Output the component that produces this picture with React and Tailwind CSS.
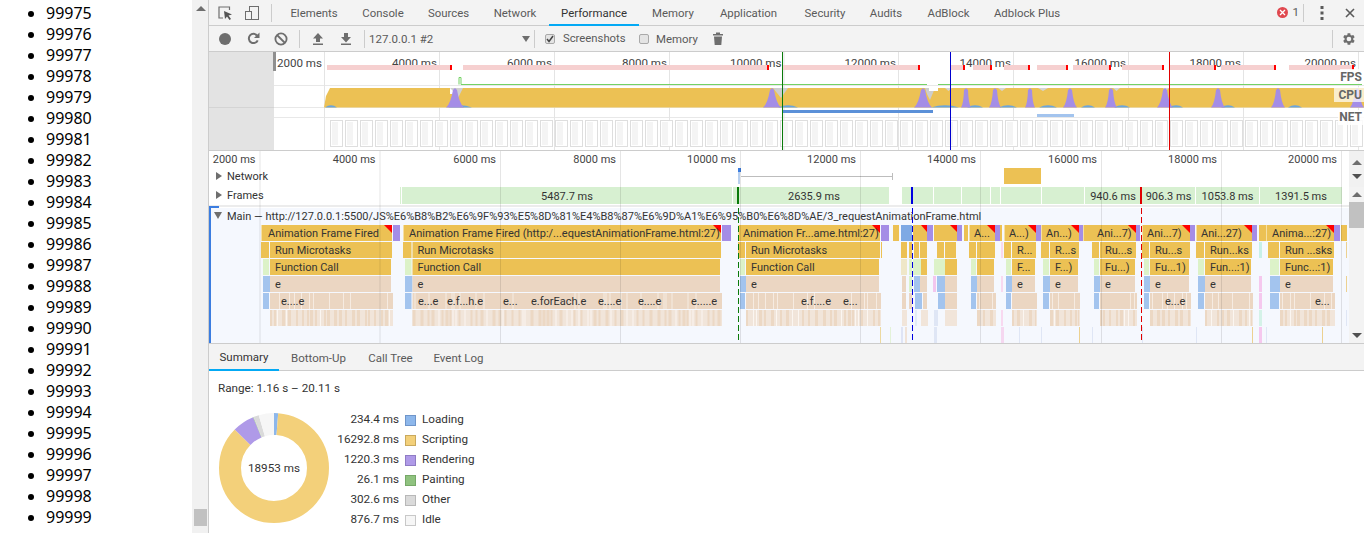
import React from 'react';

const YELLOW = '#ecc154';
const PURPLE = '#a48de6';
const TAN = '#ebd6c2';
const PALE = '#f1e5da';
const BLUE = '#a3c4ee';
const GREEN = '#dcf2c8';
const TEXT = '#333333';

const TABS = [
  ['Elements', 'w-[72px]'],
  ['Console', 'w-[66px]'],
  ['Sources', 'w-[65px]'],
  ['Network', 'w-[68px]'],
  ['Performance', 'w-[90px]'],
  ['Memory', 'w-[68px]'],
  ['Application', 'w-[83px]'],
  ['Security', 'w-[70px]'],
  ['Audits', 'w-[52px]'],
  ['AdBlock', 'w-[73px]'],
  ['Adblock Plus', 'w-[84px]'],
];

const LEGEND = [
  ['234.4 ms', 'Loading', 'bg-[#8db7eb] border-[#6f95c9]'],
  ['16292.8 ms', 'Scripting', 'bg-[#f3d07a] border-[#c9a95d]'],
  ['1220.3 ms', 'Rendering', 'bg-[#af9ae8] border-[#8f7cc4]'],
  ['26.1 ms', 'Painting', 'bg-[#8fc27f] border-[#76a868]'],
  ['302.6 ms', 'Other', 'bg-[#dadada] border-[#b8b8b8]'],
  ['876.7 ms', 'Idle', 'bg-[#f6f6f6] border-[#c8c8c8]'],
];

const SLICES = [
  [234.4, '#8db7eb'],
  [16292.8, '#f3d07a'],
  [1220.3, '#af9ae8'],
  [26.1, '#8fc27f'],
  [302.6, '#dadada'],
  [876.7, '#f6f6f6'],
];

// overview: fps segments [start, end], each closed by a red tick
const FPS = [[327, 452], [463, 769], [783, 920], [951, 965], [973, 992], [1004, 1030], [1037, 1068], [1073, 1111], [1122, 1164], [1170, 1216], [1221, 1276], [1289, 1354]];
const SPIKES = [[455, 9], [772, 9], [923, 9], [966, 5], [995, 6], [1030, 5], [1070, 7], [1111, 6], [1165, 8], [1218, 7], [1278, 7], [1357, 7]];
const HUMPS = [[331, 6], [460, 12], [788, 10], [945, 14], [975, 8], [1008, 9], [1048, 9], [1088, 7], [1122, 8], [1176, 7], [1228, 7], [1295, 7]];

// flame chart groups: start, start of the js stack, end, labels
const GROUPS = [
  { a: 261, l: 270, z: 392, t: ['Animation Frame Fired', 268], r2: 'Run Microtasks', r3: 'Function Call', r5: [['e....e', 281]] },
  { a: 403, l: 412.5, z: 721, t: ['Animation Frame Fired (http:/...equestAnimationFrame.html:27)', 409], r2: 'Run Microtasks', r3: 'Function Call', r5: [['e...e', 418], ['e.f...h.e', 447], ['e...', 503], ['e.forEach.e', 531], ['e....e', 598], ['e....e', 638], ['e.....e', 691]] },
  { a: 738, l: 746, z: 880, t: ['Animation Fr...ame.html:27)', 743], r2: 'Run Microtasks', r3: 'Function Call', r5: [['e.f....e', 801], ['e...', 843]] },
  { a: 969, l: 977, z: 995, t: ['A...', 974], r2: '', r3: '', e: '', r5: [] },
  { a: 1004, l: 1012, z: 1036, t: ['A...)', 1009], r2: 'R...', r3: 'F...', r5: [] },
  { a: 1041, l: 1050, z: 1079, t: ['An...)', 1046], r2: 'R...s', r3: 'F...)', r5: [] },
  { a: 1083, l: 1100, z: 1136, s: 1092, t: ['Ani...7)', 1097], r2: 'Ru...s', r3: 'Fu...)', r5: [] },
  { a: 1142, l: 1150, z: 1190, t: ['Ani...7)', 1147], r2: 'Ru...s', r3: 'Fu...1)', r5: [['e...e', 1165]] },
  { a: 1196, l: 1205, z: 1252, t: ['Ani...27)', 1201], r2: 'Run...ks', r3: 'Fun...:1)', r5: [] },
  { a: 1266, l: 1280, z: 1334, s: 1268, t: ['Anima...:27)', 1272], r2: 'Run ...sks', r3: 'Func...:1)', r5: [['e...', 1315]] },
];

// the short tasks between the long frames: x1, x2, colour, row
const SMALL = [
  [893, 899, YELLOW, 0], [901, 912, '#7ea9e4', 0], [913, 927, YELLOW, 0], [927, 933, PURPLE, 0], [934, 957, YELLOW, 0], [957, 962, PURPLE, 0], [964, 968, YELLOW, 0],
  [881, 882, YELLOW, 1], [901, 907, YELLOW, 1], [909, 912, YELLOW, 1], [914, 919, YELLOW, 1], [920, 927, YELLOW, 1], [937, 944, YELLOW, 1], [945, 956, YELLOW, 1],
  [901, 907, '#efe7c8', 2], [909, 912, GREEN, 2], [913, 921, GREEN, 2], [921, 927, YELLOW, 2], [934, 945, GREEN, 2], [945, 957, YELLOW, 2],
  [902, 906, TAN, 3], [909, 912, GREEN, 3], [914, 920, BLUE, 3], [920, 927, TAN, 3], [933, 936, '#f3c6ee', 3], [937, 945, BLUE, 3], [945, 957, TAN, 3],
  [902, 906, TAN, 4], [909, 912, TAN, 4], [915, 922, BLUE, 4], [923, 927, TAN, 4], [938, 945, BLUE, 4], [945, 957, TAN, 4],
  [902, 907, PALE, 5], [915, 917, '#e2ecf8', 5], [921, 928, PALE, 5], [934, 938, '#dfe6f5', 5], [945, 957, PALE, 5],
  [880, 881, '#ecd9a0', 6], [890, 891, '#e3f2d8', 6], [901, 903, '#dfe4f5', 6], [905, 907, '#f0e3d8', 6], [934, 937, '#dfe6f5', 6],
  [1001, 1003, '#f8d9f0', 1], [1001, 1003, '#f8d9f0', 3], [1001, 1003, '#f8d9f0', 5], [1001, 1004, '#f5d7f0', 6],
  [1259, 1262, '#c8f0e8', 1], [1259, 1262, '#f5c8ee', 3], [1259, 1262, '#f5c8ee', 4], [1259, 1262, '#d4f2e8', 5], [1259, 1262, '#f5c8ee', 6],
  [1019, 1020, '#dfe6f5', 6], [1041, 1042, '#dfe6f5', 6], [1079, 1080, '#ecd190', 6], [1092, 1093, '#dfe6f5', 6], [1142, 1143, '#dfe6f5', 6], [1196, 1197, '#dfe6f5', 6], [1252, 1253, '#ecd190', 6], [1322, 1323, '#ecd190', 6], [1266, 1267, '#dfe6f5', 6],
  [1346, 1347, '#ecd190', 1], [1346, 1347, '#ecd190', 3], [1346, 1347, '#dfe6f5', 5],
];

const FRAMES = [
  [400, 401], [402, 732, '5487.7 ms'], [733, 737], [739, 889, '2635.9 ms'], [902, 933], [934, 961], [962, 990], [991, 1000], [1001, 1041], [1042, 1084],
  [1085, 1141, '940.6 ms'], [1142, 1195, '906.3 ms'], [1196, 1259, '1053.8 ms'], [1260, 1342, '1391.5 ms'],
];

const rowY = (r) => 225 + r * 17;

function stripes(x1, x2, seed, step) {
  const out = [];
  let x = x1;
  let n = seed;
  while (x < x2) {
    n = (n * 31 + 7) % 97;
    const w = 1 + (n % step);
    out.push([x, Math.min(x + w, x2), n % 3]);
    x += w + 1 + (n % 5);
  }
  return out;
}

const Rect = ({ x1, x2, r, fill }) => <rect x={x1} y={rowY(r)} width={x2 - x1} height={16} fill={fill} />;

const Label = ({ x, y, children, ...rest }) => (
  <text x={x} y={y} fontSize="11" fill={TEXT} {...rest}>{children}</text>
);

function FlameGroup({ g, seed }) {
  const start = g.s || g.a;
  return (
    <g>
      <Rect x1={g.a} x2={g.z} r={0} fill={YELLOW} />
      <polygon points={`${g.z - 8},225 ${g.z},225 ${g.z},233`} fill="#f00" />
      <rect x={g.a} y={225} width={1} height={16} fill="#f5e0a5" />
      <Rect x1={start} x2={g.l - 1} r={1} fill={YELLOW} />
      <Rect x1={g.l} x2={g.z} r={1} fill={YELLOW} />
      <Rect x1={start + 2} x2={g.l - 1} r={2} fill={GREEN} />
      <Rect x1={g.l} x2={g.z - 1} r={2} fill={YELLOW} />
      <Rect x1={start + 2} x2={g.l} r={3} fill={BLUE} />
      <Rect x1={g.l} x2={g.z - 1} r={3} fill={TAN} />
      <Rect x1={start + 2} x2={g.l - 1} r={4} fill={BLUE} />
      <Rect x1={g.l} x2={g.z + 1} r={4} fill={TAN} />
      {stripes(g.l + 2, g.z, seed, 2).map(([a, b, k], i) => (
        k === 0 ? <rect key={i} x={a} y={rowY(4)} width={1} height={16} fill="#f6ebe1" /> : null
      ))}
      <Rect x1={g.l} x2={g.z + 1} r={5} fill={PALE} />
      {stripes(g.l, g.z, seed + 3, 3).map(([a, b, k], i) => (
        <rect key={i} x={a} y={rowY(5)} width={b - a} height={16} fill={k === 0 ? '#fbf6f1' : '#ecd8c4'} />
      ))}
      <Label x={g.t[1]} y={237}>{g.t[0]}</Label>
      <Label x={g.l + 5} y={254}>{g.r2}</Label>
      <Label x={g.l + 5} y={271}>{g.r3}</Label>
      {g.e !== '' && <Label x={g.l + 5} y={288}>e</Label>}
      {g.r5.map(([t, x]) => <Label key={x} x={x} y={305}>{t}</Label>)}
    </g>
  );
}

function Overview() {
  const ticks = [324, 439, 554, 669, 783.5, 898, 1013, 1128, 1243, 1358];
  const thumbs = [];
  for (let x = 330; x < 1364; x += 15) thumbs.push(x);
  return (
    <svg viewBox="209 52 1155 98" width="1155" height="98" className="block">
      <rect x="209" y="52" width="1155" height="98" fill="#fff" />
      {[85, 107, 117].map((y) => <rect key={y} x="274" y={y} width="1090" height="1" fill="#e8e8e8" />)}
      {ticks.map((x) => <rect key={x} x={x} y="52" width="1" height="98" fill="#e4e4e4" />)}
      {ticks.map((x, i) => (
        <Label key={x} x={x - 2} y="67" textAnchor="end" fill="#444" fontSize="11.6">{`${(i + 1) * 2000} ms`}</Label>
      ))}
      {FPS.map(([a, b]) => (
        <g key={a}>
          <rect x={a} y="65" width={b - a} height="5" fill="#f6d0d0" />
          <rect x={b - 2} y="65" width="2" height="5" fill="#f00" />
        </g>
      ))}
      <path d="M459 84.5 V77.5 H461 V84.5 H927" fill="none" stroke="#74d265" strokeWidth="1" />
      <path d="M938 84.5 H1362" fill="none" stroke="#74d265" strokeWidth="1" />
      <path d="M324 107.5 L326 96 L330 88 H1364 V107.5 Z" fill={YELLOW} />
      <rect x="450" y="88" width="6" height="6" fill="#fff" />
      <polygon points="450,88 463,88 458,98 454,92" fill="#cfcfcf" />
      <polygon points="773,88 788,88 781,98" fill="#cdcdcd" />
      <polygon points="925,88 935,88 930,100 927,94" fill="#cdcdcd" />
      <rect x="929" y="88" width="9" height="3" fill="#fff" />
      {[[945, 952], [998, 1006], [1038, 1048], [1113, 1120], [1163, 1169]].map(([a, b]) => (
        <polygon key={a} points={`${a},88 ${b},88 ${(a + b) / 2},91`} fill="#d5d5d5" />
      ))}
      {HUMPS.map(([x, w]) => (
        <path key={x} d={`M${x - w} 107.5 Q${x} 103 ${x + w} 107.5 Z`} fill="#6aa5dd" />
      ))}
      {SPIKES.map(([x, w]) => (
        <path
          key={x}
          d={`M${x - w} 107.5 Q${x - w / 2} 104 ${x - 2} 90 L${x} 88 L${x + 2} 90 Q${x + w / 2} 104 ${x + w} 107.5 Z`}
          fill={PURPLE}
        />
      ))}
      <rect x="783" y="110" width="150" height="3" fill="#5b90d8" />
      <rect x="1037" y="114" width="37" height="3" fill="#a3c4ee" />
      {thumbs.map((x) => (
        <g key={x}>
          <rect x={x + 0.5} y="120.5" width="12" height="26" fill="#fff" stroke="#dedede" />
          <rect x={x + 2} y="122" width="6" height="23" fill="#f4f4f4" />
        </g>
      ))}
      <rect x="209" y="52" width="65" height="98" fill="#e3e3e3" />
      <rect x="209" y="107" width="65" height="1" fill="#d4d4d4" />
      <rect x="273" y="52" width="3" height="19" fill="#8f8f8f" />
      <rect x="1340" y="69" width="24" height="15" fill="#ffffff" fillOpacity="0.85" />
      <rect x="1334" y="87" width="30" height="15" fill="#ffffff" fillOpacity="0.7" />
      <rect x="1338" y="110" width="26" height="15" fill="#ffffff" fillOpacity="0.85" />
      <Label x="1362" y="81" textAnchor="end" fill="#666" fontSize="12" fontWeight="700">FPS</Label>
      <Label x="1362" y="99" textAnchor="end" fill="#666" fontSize="12" fontWeight="700">CPU</Label>
      <Label x="1362" y="121" textAnchor="end" fill="#666" fontSize="12" fontWeight="700">NET</Label>
      <rect x="782" y="52" width="1" height="98" fill="#0a7a0a" />
      <rect x="950" y="52" width="1" height="98" fill="#0000d0" />
      <rect x="1169" y="52" width="1" height="98" fill="#e00000" />
    </svg>
  );
}

function Flame() {
  const grid = [259.5, 379.5, 500, 620, 740, 860, 980, 1101, 1221, 1341];
  return (
    <svg viewBox="209 151 1140 192" width="1140" height="192" className="block">
      <rect x="209" y="151" width="1140" height="192" fill="#fff" />
      {grid.map((x, i) => (
        <Label key={x} x={x - 4} y="163" textAnchor="end" fill="#444">{`${(i + 1) * 2000} ms`}</Label>
      ))}
      <polygon points="216,172 216,180 222,176" fill="#6e6e6e" />
      <Label x="227" y="180">Network</Label>
      <rect x="738" y="170" width="2" height="14" fill="#b9d0ef" />
      <rect x="738" y="168" width="3" height="4" fill="#3b7de0" />
      <rect x="741" y="176" width="151" height="1" fill="#bdbdbd" />
      <rect x="892" y="173" width="1" height="7" fill="#bdbdbd" />
      <rect x="1004" y="168" width="37" height="16" fill={YELLOW} />

      <polygon points="216,191 216,199 222,195" fill="#6e6e6e" />
      <Label x="227" y="199">Frames</Label>
      {FRAMES.map(([a, b, t]) => (
        <g key={a}>
          <rect x={a} y="187" width={b - a} height="17" fill="#d7f0d1" />
          {t && <Label x={(a + b) / 2} y="200" textAnchor="middle">{t}</Label>}
        </g>
      ))}

      <rect x="209" y="205" width="1140" height="2" fill="#ececec" />
      <rect x="209" y="208" width="1140" height="135" fill="#f5f8fe" />
      <rect x="209" y="206" width="2" height="137" fill="#3b7de0" />
      <rect x="209" y="206" width="10" height="2" fill="#3b7de0" />
      <polygon points="214,212 222,212 218,219" fill="#6e6e6e" />
      <Label x="227" y="220">Main — http://127.0.0.1:5500/JS%E6%B8%B2%E6%9F%93%E5%8D%81%E4%B8%87%E6%9D%A1%E6%95%B0%E6%8D%AE/3_requestAnimationFrame.html</Label>

      {GROUPS.map((g, i) => <FlameGroup key={g.a} g={g} seed={i * 11 + 5} />)}
      {SMALL.map(([a, b, c, r], i) => <Rect key={i} x1={a} x2={b} r={r} fill={c} />)}
      {[[393, 400], [722, 731], [881, 889], [995, 1000], [1036, 1041], [1079, 1083], [1136, 1140], [1190, 1195], [1252, 1257], [1334, 1340]].map(([a, b]) => (
        <Rect key={a} x1={a} x2={b} r={0} fill={PURPLE} />
      ))}
      {[[1000, 1002], [1341, 1347], [1259, 1266]].map(([a, b]) => <Rect key={a} x1={a} x2={b} r={0} fill={YELLOW} />)}
      <polygon points="921,225 927,225 927,232" fill="#f00" />
      <polygon points="950,225 957,225 957,232" fill="#f00" />

      {grid.map((x) => <rect key={x} x={x} y="151" width="1" height="192" fill="#000" fillOpacity="0.1" />)}

      <rect x="737" y="187" width="2" height="17" fill="#0a7a0a" />
      <path d="M738.5 208 V343" stroke="#0a7a0a" strokeWidth="1" strokeDasharray="6 3" />
      <rect x="911" y="187" width="2" height="17" fill="#0000e0" />
      <path d="M912.5 208 V343" stroke="#0000e0" strokeWidth="1" strokeDasharray="6 3" />
      <rect x="1140" y="187" width="2" height="17" fill="#e00000" />
      <path d="M1141.5 208 V343" stroke="#e00000" strokeWidth="1" strokeDasharray="6 3" />
    </svg>
  );
}

function Donut() {
  const total = SLICES.reduce((s, [v]) => s + v, 0);
  const r = 44;
  const len = 2 * Math.PI * r;
  let acc = 0;
  return (
    <svg width="110" height="110" viewBox="0 0 110 110" className="shrink-0">
      <g transform="rotate(-90 55 55)">
        {SLICES.map(([v, c]) => {
          const dash = (v / total) * len;
          const offset = -acc;
          acc += dash;
          return <circle key={c} cx="55" cy="55" r={r} fill="none" stroke={c} strokeWidth="22" strokeDasharray={`${dash} ${len - dash}`} strokeDashoffset={offset} />;
        })}
      </g>
      <text x="55" y="59" textAnchor="middle" fontSize="11.7" fill={TEXT}>18953 ms</text>
    </svg>
  );
}

const ArrowUp = () => <div className="w-0 h-0 border-x-[5px] border-x-transparent border-b-[5px] border-b-[#6e6e6e]" />;
const ArrowDown = () => <div className="w-0 h-0 border-x-[5px] border-x-transparent border-t-[5px] border-t-[#505050]" />;

const ToolBtn = ({ children }) => <div className="w-[28px] h-full flex items-center justify-center shrink-0">{children}</div>;
const Divider = ({ className }) => <div className={`w-px h-[18px] bg-[#cccccc] shrink-0 ${className}`} />;

const Checkbox = ({ checked }) => (
  <div className="w-[10px] h-[10px] rounded-[2px] bg-[#e4e4e4] border border-[#a9a9a9] flex items-center justify-center shrink-0">
    {checked && (
      <svg width="8" height="8" viewBox="0 0 8 8"><path d="M1 4 L3 6.5 L7 1" fill="none" stroke="#444" strokeWidth="1.5" /></svg>
    )}
  </div>
);

function TabBar() {
  return (
    <div className="h-[26px] bg-[#f3f3f3] border-b border-[#cccccc] flex items-stretch shrink-0 pl-px text-[#5a5a5a]">
      <ToolBtn>
        <svg width="16" height="16" viewBox="0 0 16 16" className="ml-[2px]">
          <path d="M12.5 5 V2 H2 V13 H6" fill="none" stroke="#6e6e6e" strokeWidth="1.2" />
          <path d="M7 6 L15 9.5 L11.5 10.5 L14 14 L12.5 15 L10 11.5 L8 14 Z" fill="#555" />
        </svg>
      </ToolBtn>
      <ToolBtn>
        <svg width="16" height="16" viewBox="0 0 16 16">
          <rect x="5.5" y="1.5" width="9" height="13" fill="none" stroke="#6e6e6e" />
          <rect x="1.5" y="6.5" width="6" height="8" fill="#f3f3f3" stroke="#6e6e6e" />
        </svg>
      </ToolBtn>
      <Divider className="self-center ml-[5px] mr-[6px] h-[16px]" />
      {TABS.map(([name, w]) => (
        <div key={name} className={`${w} shrink-0 flex items-center justify-center pt-[2px] text-[11.4px] ${name === 'Performance' ? 'text-[#333333] border-b-2 border-[#03a9f4] -mb-px pt-[3px]' : ''}`}>
          {name}
        </div>
      ))}
      <div className="flex-1" />
      <div className="flex items-center">
        <div className="w-[11px] h-[11px] rounded-full bg-[#e0484f] flex items-center justify-center">
          <svg width="7" height="7" viewBox="0 0 7 7"><path d="M1 1 L6 6 M6 1 L1 6" stroke="#fff" strokeWidth="1.3" /></svg>
        </div>
        <span className="ml-[4px] text-[11.7px]">1</span>
        <Divider className="ml-[4px] h-[16px]" />
        <div className="w-[36px] flex justify-center">
          <svg width="4" height="14" viewBox="0 0 4 14"><g fill="#5a5a5a"><rect x="0.5" y="0" width="3" height="3" /><rect x="0.5" y="5.5" width="3" height="3" /><rect x="0.5" y="11" width="3" height="3" /></g></svg>
        </div>
        <div className="w-[20px] flex justify-center mr-[4px]">
          <svg width="10" height="10" viewBox="0 0 10 10"><path d="M1 1 L9 9 M9 1 L1 9" stroke="#5a5a5a" strokeWidth="1.6" /></svg>
        </div>
      </div>
    </div>
  );
}

function Toolbar() {
  return (
    <div className="h-[26px] bg-[#f3f3f3] border-b border-[#cccccc] flex items-center pl-[2px] shrink-0 text-[#5a5a5a]">
      <ToolBtn><div className="w-[12px] h-[12px] rounded-full bg-[#6e6e6e]" /></ToolBtn>
      <ToolBtn>
        <svg width="13" height="13" viewBox="0 0 13 13">
          <path d="M10.7 8.3 A4.6 4.6 0 1 1 10 3.5" fill="none" stroke="#6e6e6e" strokeWidth="2" />
          <polygon points="12.5,0.5 12.5,6 7,6" fill="#6e6e6e" />
        </svg>
      </ToolBtn>
      <ToolBtn>
        <svg width="14" height="14" viewBox="0 0 14 14">
          <circle cx="7" cy="7" r="5.6" fill="none" stroke="#6e6e6e" strokeWidth="1.8" />
          <path d="M3 3 L11 11" stroke="#6e6e6e" strokeWidth="1.8" />
        </svg>
      </ToolBtn>
      <Divider className="ml-[4px] mr-[4px]" />
      <ToolBtn>
        <svg width="12" height="12" viewBox="0 0 12 12"><path d="M6 0 L11 5.5 H8 V9 H4 V5.5 H1 Z M1 10.5 H11 V12 H1 Z" fill="#6e6e6e" /></svg>
      </ToolBtn>
      <ToolBtn>
        <svg width="12" height="12" viewBox="0 0 12 12"><path d="M4 0 H8 V4 H11 L6 9.5 L1 4 H4 Z M1 10.5 H11 V12 H1 Z" fill="#6e6e6e" /></svg>
      </ToolBtn>
      <Divider className="ml-[4px]" />
      <div className="w-[168px] pl-[4px] flex items-center justify-between pr-[3px] text-[11.5px] shrink-0">
        <span className="pt-[2px]">127.0.0.1 #2</span>
        <div className="w-0 h-0 border-x-[4px] border-x-transparent border-t-[6px] border-t-[#6e6e6e]" />
      </div>
      <Divider className="ml-[1px]" />
      <div className="ml-[10px]"><Checkbox checked /></div>
      <span className="ml-[8px] pt-[2px] text-[11.3px] w-[76px]">Screenshots</span>
      <Checkbox />
      <span className="ml-[7px] pt-[2px] text-[11.4px] w-[57px]">Memory</span>
      <svg width="10" height="13" viewBox="0 0 10 13">
        <path d="M0 2 H3 V0.5 H7 V2 H10 V3.5 H0 Z M1 4.5 H9 L8.3 13 H1.7 Z" fill="#6e6e6e" />
      </svg>
      <div className="flex-1" />
      <Divider />
      <div className="w-[31px] flex justify-center">
        <svg width="16" height="16" viewBox="0 0 24 24" fill="#6e6e6e">
          <path d="M19.4 13a7.5 7.5 0 0 0 0-2l2.1-1.6-2-3.5-2.5 1a7.5 7.5 0 0 0-1.7-1l-.4-2.6h-4l-.4 2.6a7.5 7.5 0 0 0-1.7 1l-2.5-1-2 3.5L6.400 11a7.500 7.500 0 0 0 0 2l-2.100 1.600 2 3.500 2.500-1a7.500 7.500 0 0 0 1.700 1l.4 2.600h4l.4-2.600a7.500 7.500 0 0 0 1.700-1l2.500 1 2-3.500zM12.900 15.500a3.500 3.500 0 1 1 0-7 3.500 3.500 0 0 1 0 7z" transform="translate(-1 0)" />
        </svg>
      </div>
    </div>
  );
}

function Scrollbar() {
  return (
    <div className="w-[15px] bg-[#f3f3f3] flex flex-col shrink-0">
      <div className="h-[36px] bg-[#f1f1f1] flex flex-col items-center justify-around py-[4px]">
        <ArrowUp />
        <ArrowDown />
      </div>
      <div className="flex-1 flex flex-col items-center">
        <div className="h-[15px] flex items-center"><ArrowUp /></div>
        <div className="w-full h-[26px] bg-[#c1c1c1]" />
        <div className="flex-1" />
        <div className="h-[15px] flex items-center"><ArrowDown /></div>
      </div>
    </div>
  );
}

export default function App() {
  const items = [];
  for (let i = 99975; i <= 99999; i++) items.push(i);
  return (
    <div className="w-[1364px] h-[533px] overflow-hidden flex bg-white font-['Roboto',sans-serif] text-[#333333]">
      <ul className="w-[192px] shrink-0 list-disc pl-[46px] pt-[3px] text-[16px] leading-[21px] text-black font-['Noto_Sans',sans-serif]">
        {items.map((n) => <li key={n}>{n}</li>)}
      </ul>
      <div className="w-[17px] bg-[#f1f1f1] shrink-0 flex flex-col items-center">
        <div className="h-[17px] flex items-center"><ArrowUp /></div>
        <div className="flex-1" />
        <div className="w-[13px] h-[17px] bg-[#c1c1c1] mb-[7px]" />
      </div>
      <div className="w-[1156px] shrink-0 flex flex-col border-l border-[#cccccc] -ml-px">
        <TabBar />
        <Toolbar />
        <div className="border-b border-[#cccccc] shrink-0">
          <Overview />
        </div>
        <div className="flex shrink-0 border-b border-[#cccccc]">
          <Flame />
          <Scrollbar />
        </div>
        <div className="bg-[#f3f3f3] h-[27px] pt-[3px] border-b border-[#cccccc] flex items-stretch shrink-0 text-[11.5px] text-[#5a5a5a]">
          <div className="w-[70px] flex items-center justify-center text-[#333333] border-b-2 border-[#03a9f4] -mb-px">Summary</div>
          <div className="w-[79px] flex items-center justify-center">Bottom-Up</div>
          <div className="w-[65px] flex items-center justify-center">Call Tree</div>
          <div className="w-[71px] flex items-center justify-center">Event Log</div>
        </div>
        <div className="bg-white flex-1 pl-[9px] pt-[9px] text-[11.7px]">
          <div className="leading-[16px]">Range: 1.16 s – 20.11 s</div>
          <div className="flex items-start mt-[14px]">
            <div className="ml-px mt-[3px]"><Donut /></div>
            <div className="flex flex-col">
              {LEGEND.map(([v, name, c]) => (
                <div key={name} className="h-[20px] flex items-center">
                  <span className="w-[70px] text-right">{v}</span>
                  <span className={`ml-[6px] w-[11px] h-[11px] border ${c}`} />
                  <span className="ml-[6px]">{name}</span>
                </div>
              ))}
            </div>
          </div>
        </div>
      </div>
    </div>
  );
}
